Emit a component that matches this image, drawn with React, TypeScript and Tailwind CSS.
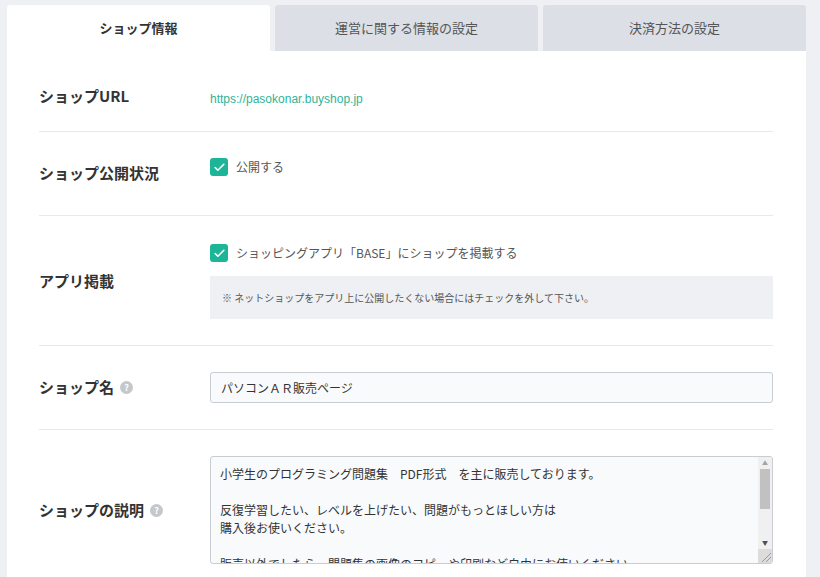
import React from 'react';
import { Check } from 'lucide-react';

const font = { fontFamily: '"Noto Sans CJK JP", "Noto Sans", sans-serif' };

function Help() {
  return (
    <span className="ml-[6px] inline-flex h-[13px] w-[13px] items-center justify-center rounded-full bg-[#c4c7cc] text-[9px] font-bold leading-none text-white">
      ?
    </span>
  );
}

function Checkbox({ label }: { label: string }) {
  return (
    <label className="flex items-center gap-[8px]">
      <span className="flex h-[18px] w-[18px] items-center justify-center rounded-[3px] bg-[#1db597]">
        <Check size={13} strokeWidth={3} className="text-white" />
      </span>
      <span className="text-[12px] text-[#555]">{label}</span>
    </label>
  );
}

function Row({ label, help, children, className }: { label: string; help?: boolean; children: React.ReactNode; className?: string }) {
  return (
    <div className={`flex items-center border-b border-[#e6e8ec] ${className ?? 'py-[26px]'}`}>
      <div className="flex w-[171px] shrink-0 items-center text-[15px] font-bold text-[#333]">
        {label}
        {help && <Help />}
      </div>
      <div className="flex-1">{children}</div>
    </div>
  );
}

export default function App() {
  const desc = `小学生のプログラミング問題集　PDF形式　を主に販売しております。

反復学習したい、レベルを上げたい、問題がもっとほしい方は
購入後お使いください。

販売以外でしたら、問題集の画像のコピーや印刷など自由にお使いください。
よろしくお願いします。`;

  return (
    <div className="h-[577px] w-[820px] overflow-hidden bg-[#eff0f4] pl-[7px] pt-[5px]" style={font}>
      <div className="w-[799px]">
        {/* Tabs */}
        <div className="flex gap-[5px]">
          <div className="flex h-[46px] w-[263px] items-center justify-center rounded-t-[3px] bg-white text-[13px] font-bold text-[#333]">
            ショップ情報
          </div>
          <div className="flex h-[46px] w-[263px] items-center justify-center rounded-t-[3px] bg-[#dcdfe6] text-[13px] text-[#555]">
            運営に関する情報の設定
          </div>
          <div className="flex h-[46px] w-[263px] items-center justify-center rounded-t-[3px] bg-[#dcdfe6] text-[13px] text-[#555]">
            決済方法の設定
          </div>
        </div>

        {/* Content */}
        <div className="bg-white pl-[32px] pr-[33px] pb-[40px]">
          <Row label="ショップURL" className="pt-[33px] pb-[23px]">
            <span className="text-[12px] text-[#2fb49a]" style={{ fontFamily: '"Liberation Sans", Arial, sans-serif' }}>
              https://pasokonar.buyshop.jp
            </span>
          </Row>

          <Row label="ショップ公開状況">
            <div className="pb-[13px]">
              <Checkbox label="公開する" />
            </div>
          </Row>

          <Row label="アプリ掲載" className="pt-[28px] pb-[26px]">
            <Checkbox label="ショッピングアプリ「BASE」にショップを掲載する" />
            <div className="mt-[14px] flex h-[43px] items-center bg-[#eef0f4] px-[12px] text-[10px] text-[#555]">
              ※ ネットショップをアプリ上に公開したくない場合にはチェックを外して下さい。
            </div>
          </Row>

          <Row label="ショップ名" help>
            <input
              readOnly
              value="パソコンＡＲ販売ページ"
              className="h-[31px] w-full rounded-[3px] border border-[#c9ccd3] bg-[#f9fafc] px-[10px] text-[12px] text-[#333] outline-none"
              style={font}
            />
          </Row>

          <Row label="ショップの説明" help>
            <div className="relative h-[108px] w-full overflow-hidden rounded-[3px] border border-[#c9ccd3] bg-[#f9fafc]">
              <textarea
                readOnly
                value={desc}
                className="block h-full w-full resize-none overflow-hidden bg-transparent pl-[9px] pr-[24px] pt-[8px] text-[12px] leading-[18px] text-[#333] outline-none"
                style={font}
              />
              {/* scrollbar */}
              <div className="absolute right-0 top-0 flex h-full w-[14px] flex-col bg-[#f0f0f0]">
                <div className="flex h-[12px] items-center justify-center text-[6px] leading-none text-[#a3a3a3]">▲</div>
                <div className="mx-[2px] h-[40px] bg-[#c1c1c1]" />
                <div className="flex-1" />
                <div className="flex h-[12px] items-center justify-center text-[6px] leading-none text-[#505050]">▼</div>
                <div className="relative h-[14px] bg-[#dcdcdc]">
                  <svg width="14" height="14" viewBox="0 0 14 14" className="absolute inset-0">
                    <line x1="4" y1="13" x2="13" y2="4" stroke="#9a9a9a" strokeWidth="1" />
                    <line x1="8" y1="13" x2="13" y2="8" stroke="#9a9a9a" strokeWidth="1" />
                  </svg>
                </div>
              </div>
            </div>
          </Row>
        </div>
      </div>
    </div>
  );
}
